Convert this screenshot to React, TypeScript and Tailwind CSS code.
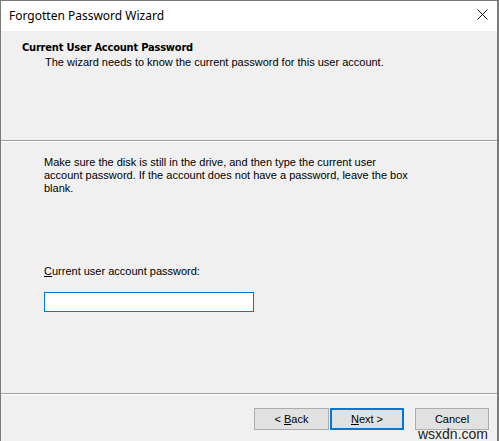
import React from "react";

export default function App() {
  const ui = { fontFamily: '"Liberation Sans", Arial, sans-serif' };
  const title = { fontFamily: '"Noto Sans", "Open Sans", sans-serif' };
  return (
    <div className="relative w-[499px] h-[441px] overflow-hidden bg-[#f0f0f0] border-t border-l border-r-2 border-[#7a7a7a]" style={ui}>
      {/* Title bar */}
      <div className="h-[30px] bg-white flex items-center justify-between pl-[8px] pr-[9px]">
        <span className="text-[12px] text-black leading-none" style={title}>Forgotten Password Wizard</span>
        <svg width="11" height="11" viewBox="0 0 11 11" className="mt-[-3px]">
          <path d="M0.5 0.5 L10.5 10.5 M10.5 0.5 L0.5 10.5" stroke="#111" strokeWidth="1" />
        </svg>
      </div>
      {/* Header */}
      <div className="h-[109px] pt-[10px] pl-[21px]">
        <div className="text-[11px] font-bold text-black leading-[13px]" style={{ fontFamily: '"DejaVu Sans Condensed", "Liberation Sans", sans-serif', letterSpacing: "-0.2px" }}>Current User Account Password</div>
        <div className="text-[11px] text-black leading-[13px] pl-[23px] mt-[2px]">The wizard needs to know the current password for this user account.</div>
      </div>
      <div className="h-px bg-[#a0a0a0]" />
      <div className="h-px bg-white" />
      {/* Body */}
      <div className="h-[251px] pl-[43px] pt-[14px]">
        <p className="text-[11px] text-black leading-[13px]">
          Make sure the disk is still in the drive, and then type the current user
          <br />
          account password. If the account does not have a password, leave the box
          <br />
          blank.
        </p>
        <div className="mt-[70px] text-[11px] text-black leading-[13px]">
          <span className="underline underline-offset-1">C</span>urrent user account password:
        </div>
        <div className="mt-[14px] w-[210px] h-[20px] bg-white border border-[#0078d7]" />
      </div>
      <div className="h-px bg-[#a0a0a0]" />
      <div className="h-px bg-white" />
      {/* Footer */}
      <div className="flex pt-[13px] pl-[253px]">
        <button className="w-[75px] h-[22px] bg-[#e1e1e1] border border-[#adadad] text-[11px] text-black leading-none" style={ui}>
          &lt; <span className="underline">B</span>ack
        </button>
        <button className="ml-[1px] w-[74px] h-[22px] bg-[#e1e1e1] border-2 border-[#0078d7] text-[11px] text-black leading-none" style={ui}>
          <span className="underline">N</span>ext &gt;
        </button>
        <button className="ml-[11px] w-[74px] h-[22px] bg-[#e1e1e1] border border-[#adadad] text-[11px] text-black leading-none" style={ui}>
          Cancel
        </button>
      </div>
      <div className="absolute right-[9px] bottom-0 text-[14px] text-[#222] leading-none" style={{ fontFamily: '"Liberation Sans", Arial, sans-serif' }}>wsxdn.com</div>
    </div>
  );
}
